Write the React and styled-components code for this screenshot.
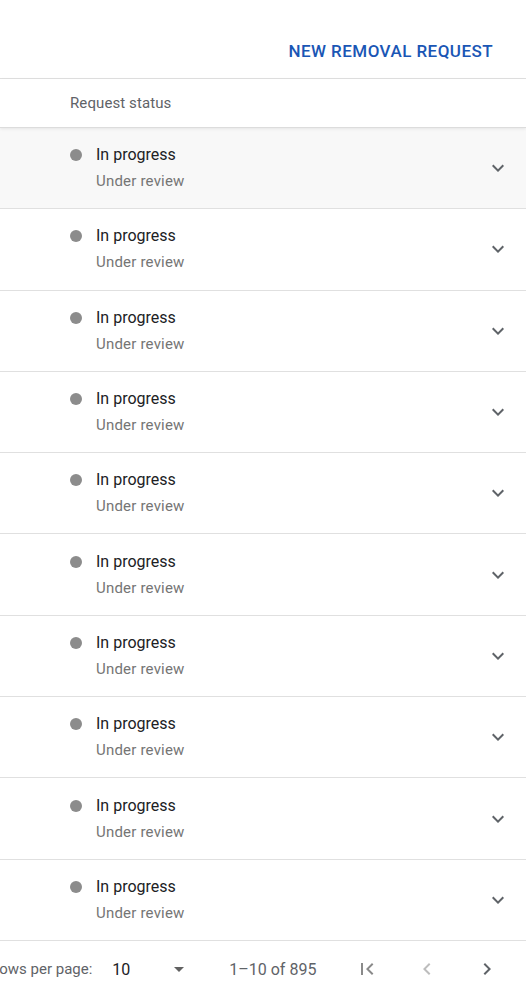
import styled, { createGlobalStyle } from "styled-components";

const GlobalStyle = createGlobalStyle`
  html, body {
    margin: 0;
    padding: 0;
    background: #ffffff;
  }
  body {
    font-family: Roboto, "Liberation Sans", Arial, sans-serif;
    overflow: hidden;
  }
`;

const Page = styled.div`
  width: 526px;
  height: 1000px;
  display: flex;
  flex-direction: column;
  overflow: hidden;
  background: #fff;
`;

const TopBar = styled.div`
  height: 79px;
  box-sizing: border-box;
  display: flex;
  align-items: flex-start;
  justify-content: flex-end;
  padding: 31px 17px 0 0;
  border-bottom: 1px solid #e0e0e0;
`;

const TextButton = styled.button`
  background: none;
  border: none;
  padding: 0 16px;
  line-height: 40px;
  font-family: Roboto, "Liberation Sans", Arial, sans-serif;
  font-size: 17px;
  font-weight: 500;
  letter-spacing: 0.45px;
  color: #1a56b5;
  cursor: pointer;
`;

const HeadRow = styled.div`
  height: 47px;
  display: flex;
  align-items: center;
  padding: 0 0 1px 70px;
  border-bottom: 1px solid #dcdcdc;
  box-shadow: 0 1px 3px rgba(0, 0, 0, 0.08);
  position: relative;
  z-index: 1;
  font-size: 15px;
  color: #5f6368;
  letter-spacing: 0.1px;
`;

const Row = styled.div`
  height: 81.3px;
  box-sizing: border-box;
  display: flex;
  align-items: center;
  padding: 0 16px 0 70px;
  border-bottom: 1px solid #e0e0e0;
  background: ${(p) => (p.$hover ? "#f8f8f8" : "#fff")};
`;

const Status = styled.div`
  display: grid;
  grid-template-columns: 26px auto;
  align-items: center;
  row-gap: 2px;
`;

const Dot = styled.span`
  width: 12px;
  height: 12px;
  border-radius: 50%;
  background: #8c8c8c;
`;

const Title = styled.div`
  font-size: 16px;
  line-height: 24px;
  color: #202124;
`;

const Sub = styled.div`
  grid-column: 2;
  font-size: 15px;
  line-height: 24px;
  color: #757575;
  letter-spacing: 0.2px;
`;

const IconBtn = styled.span`
  display: flex;
  align-items: center;
  justify-content: center;
  width: 24px;
  height: 24px;
  margin-left: ${(p) => p.$ml || 0};
  color: ${(p) => p.$color || "#5f6368"};
`;

const Footer = styled.div`
  flex: 1;
  display: flex;
  align-items: center;
  padding-bottom: 2px;
  font-size: 15px;
  color: #5f6368;
`;

const RowsLabel = styled.span`
  margin-left: -10px;
  white-space: nowrap;
`;

const PerPage = styled.span`
  margin-left: 20px;
  font-size: 16px;
  color: #202124;
`;

const Range = styled.span`
  margin-left: 38px;
  font-size: 16px;
  white-space: nowrap;
`;

const Icon = ({ d, size = 24 }) => (
  <svg width={size} height={size} viewBox="0 0 24 24" fill="currentColor">
    <path d={d} />
  </svg>
);

const EXPAND = "M16.59 8.59L12 13.17 7.41 8.59 6 10l6 6 6-6z";
const DROP = "M7 10l5 5 5-5z";
const FIRST = "M18.41 16.59L13.82 12l4.59-4.59L17 6l-6 6 6 6zM6 6h2v12H6z";
const PREV = "M15.41 7.41L14 6l-6 6 6 6 1.41-1.41L10.83 12z";
const NEXT = "M10 6L8.59 7.41 13.17 12l-4.58 4.59L10 18l6-6z";

const rows = Array.from({ length: 10 }, (_, i) => i);

export default function App() {
  return (
    <Page>
      <GlobalStyle />
      <TopBar>
        <TextButton>NEW REMOVAL REQUEST</TextButton>
      </TopBar>
      <HeadRow>Request status</HeadRow>
      {rows.map((i) => (
        <Row key={i} $hover={i === 0}>
          <Status>
            <Dot />
            <Title>In progress</Title>
            <Sub>Under review</Sub>
          </Status>
          <IconBtn $ml="auto">
            <Icon d={EXPAND} />
          </IconBtn>
        </Row>
      ))}
      <Footer>
        <RowsLabel>Rows per page:</RowsLabel>
        <PerPage>10</PerPage>
        <IconBtn $ml="37px" $color="#616161">
          <Icon d={DROP} />
        </IconBtn>
        <Range>1–10 of 895</Range>
        <IconBtn $ml="39px" $color="#8a8a8a">
          <Icon d={FIRST} />
        </IconBtn>
        <IconBtn $ml="36px" $color="#bdbdbd">
          <Icon d={PREV} />
        </IconBtn>
        <IconBtn $ml="36px" $color="#5f6368">
          <Icon d={NEXT} />
        </IconBtn>
      </Footer>
    </Page>
  );
}
